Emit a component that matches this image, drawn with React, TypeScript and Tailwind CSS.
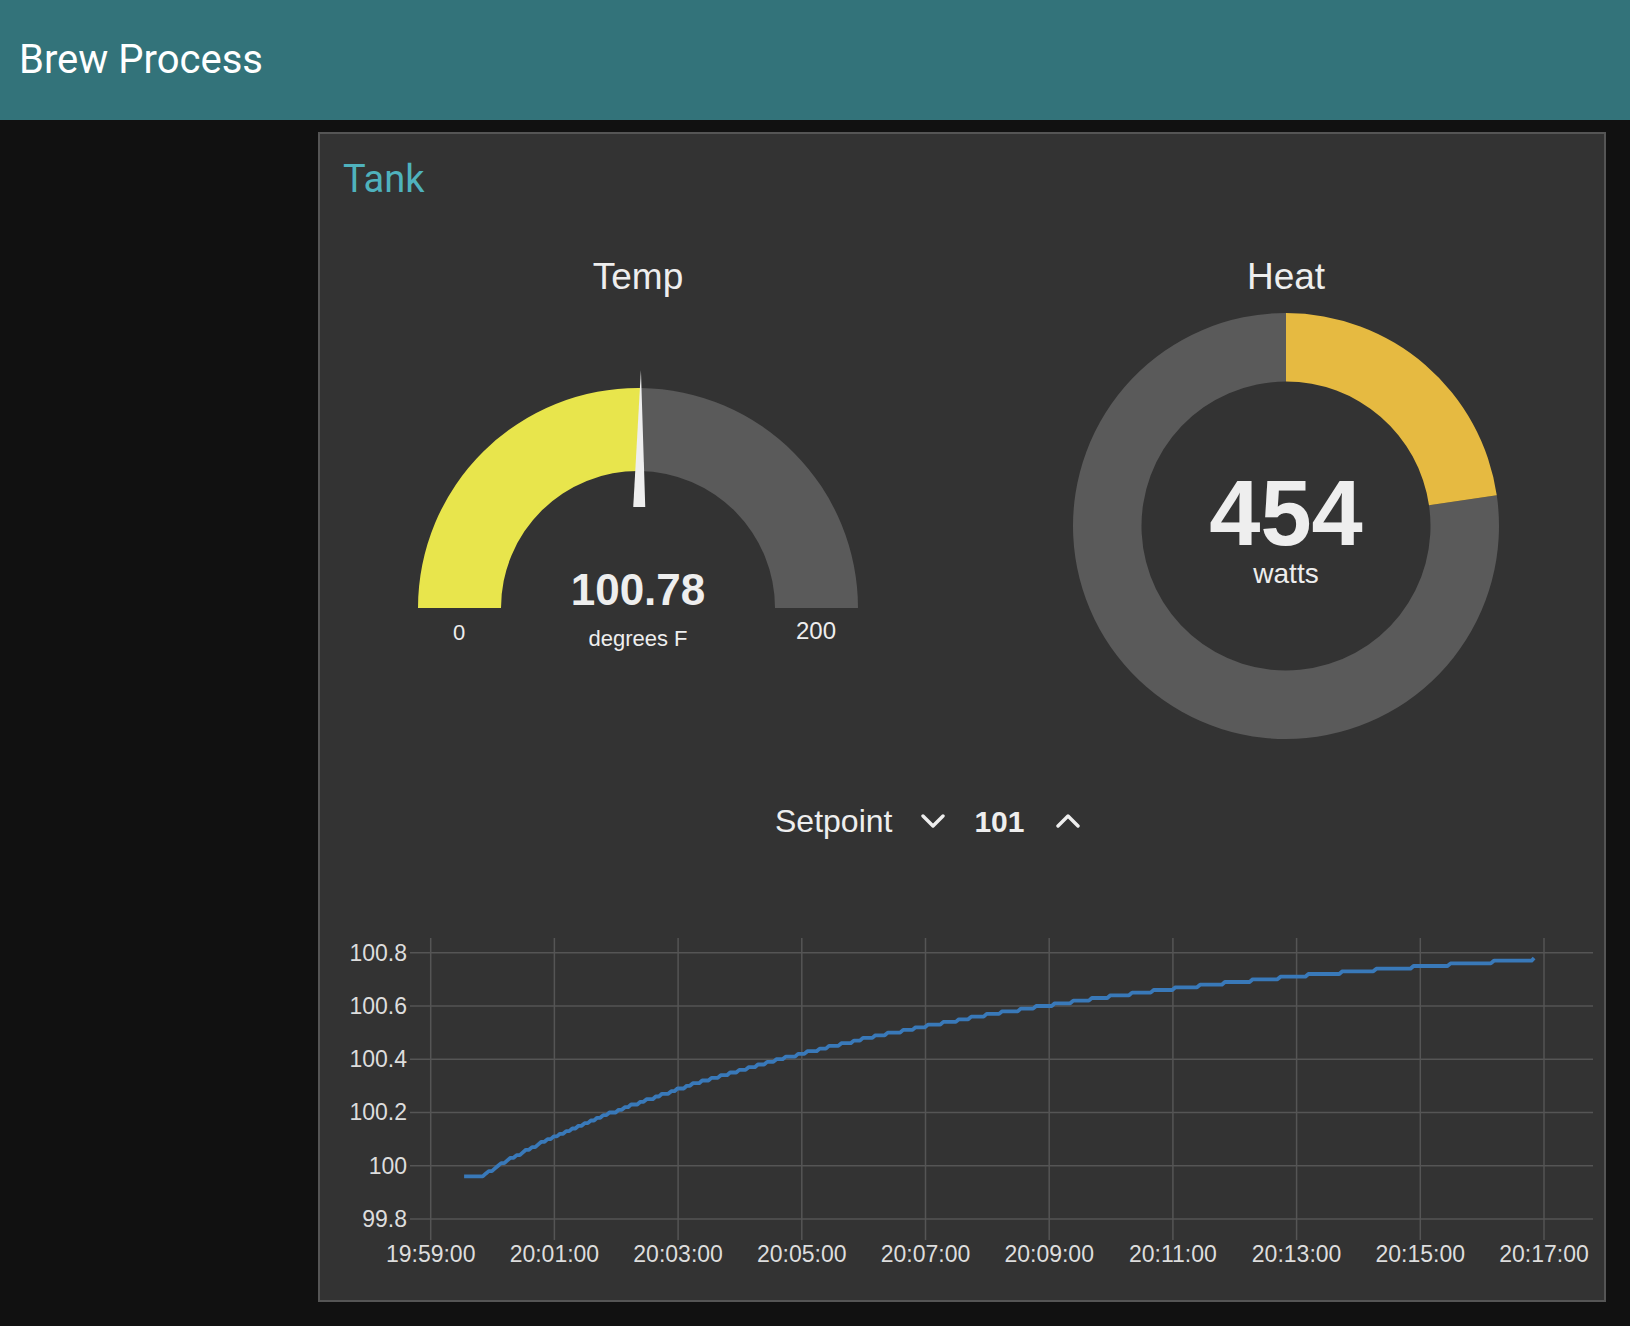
import React from "react";

const SANS = "font-['Liberation_Sans',Arial,sans-serif]";

// gauge geometry
const TEMP = { value: 100.78, min: 0, max: 200, cx: 240, cy: 304, R: 220, r: 137 };
const HEAT = { value: 454, max: 2000, cx: 230, cy: 222, R: 213, r: 144.5 };

function tempPoint(f: number, rad: number) {
  const a = Math.PI * (1 - f);
  return [TEMP.cx + rad * Math.cos(a), TEMP.cy - rad * Math.sin(a)];
}

function heatPoint(f: number, rad: number) {
  const a = 2 * Math.PI * f;
  return [HEAT.cx + rad * Math.sin(a), HEAT.cy - rad * Math.cos(a)];
}

const p = (pt: number[]) => `${pt[0].toFixed(2)} ${pt[1].toFixed(2)}`;

function TempGauge() {
  const { cx, cy, R, r } = TEMP;
  const f = (TEMP.value - TEMP.min) / (TEMP.max - TEMP.min);
  const filled = `M ${cx - R} ${cy} A ${R} ${R} 0 0 1 ${p(tempPoint(f, R))} L ${p(tempPoint(f, r))} A ${r} ${r} 0 0 0 ${cx - r} ${cy} Z`;
  const rest = `M ${p(tempPoint(f, R))} A ${R} ${R} 0 0 1 ${cx + R} ${cy} L ${cx + r} ${cy} A ${r} ${r} 0 0 0 ${p(tempPoint(f, r))} Z`;

  // needle
  const a = Math.PI * (1 - f);
  const ux = Math.cos(a);
  const uy = -Math.sin(a);
  const tip = [cx + 238 * ux, cy + 238 * uy];
  const base = [cx + 101 * ux, cy + 101 * uy];
  const px = -uy * 6;
  const py = ux * 6;
  const needle = `M ${p(tip)} L ${p([base[0] + px, base[1] + py])} L ${p([base[0] - px, base[1] - py])} Z`;

  return (
    <svg width={480} height={380} className={SANS}>
      <path d={filled} fill="#e8e54c" />
      <path d={rest} fill="#5a5a5a" />
      <path d={needle} fill="#eeeeee" />
      <text x={240} y={301} textAnchor="middle" fontSize={44} fontWeight="bold" fill="#eeeeee">
        100.78
      </text>
      <text x={240} y={342} textAnchor="middle" fontSize={22} fill="#eeeeee">
        degrees F
      </text>
      <text x={61} y={336} textAnchor="middle" fontSize={22} fill="#eeeeee">
        0
      </text>
      <text x={418} y={335} textAnchor="middle" fontSize={24} fill="#eeeeee">
        200
      </text>
    </svg>
  );
}

function HeatDonut() {
  const { R, r } = HEAT;
  const f = HEAT.value / HEAT.max;
  const filled = `M ${p(heatPoint(0, R))} A ${R} ${R} 0 0 1 ${p(heatPoint(f, R))} L ${p(heatPoint(f, r))} A ${r} ${r} 0 0 0 ${p(heatPoint(0, r))} Z`;
  const rest = `M ${p(heatPoint(f, R))} A ${R} ${R} 0 1 1 ${p(heatPoint(0, R))} L ${p(heatPoint(0, r))} A ${r} ${r} 0 1 0 ${p(heatPoint(f, r))} Z`;
  return (
    <svg width={460} height={450} className={SANS}>
      <path d={rest} fill="#5a5a5a" />
      <path d={filled} fill="#e6ba41" />
      <text x={230} y={241} textAnchor="middle" fontSize={92} fontWeight="bold" fill="#eeeeee">
        454
      </text>
      <text x={230} y={279} textAnchor="middle" fontSize={28} fill="#eeeeee">
        watts
      </text>
    </svg>
  );
}

function Chevron({ up }: { up?: boolean }) {
  return (
    <svg width={24} height={14} viewBox="0 0 24 14">
      <path
        d={up ? "M2 12 L12 2 L22 12" : "M2 2 L12 12 L22 2"}
        fill="none"
        stroke="#eeeeee"
        strokeWidth={3.4}
        strokeLinecap="round"
        strokeLinejoin="round"
      />
    </svg>
  );
}

// chart geometry, svg coords
const X0 = 110.7;
const DX = 61.85; // px per minute
const Y_BOTTOM = 331;
const PX_PER_UNIT = 266.3;
const yOf = (v: number) => Y_BOTTOM - (v - 99.8) * PX_PER_UNIT;
const xOf = (t: number) => X0 + t * DX;

function buildSeries() {
  const pts: [number, number][] = [];
  for (let t = 0.54; t <= 17.8; t += 0.05) {
    let v = 99.96;
    if (t >= 0.85) {
      v = 100.87 - 0.98 * Math.exp(-0.13 * t) - 0.03 * Math.exp(-(t - 0.85) * 1.5);
    }
    v = Math.round(v * 100) / 100;
    pts.push([t, v]);
  }
  pts.push([17.8, 100.77]);
  pts.push([17.84, 100.78]);
  return pts;
}

function TempChart() {
  const yTicks = [100.8, 100.6, 100.4, 100.2, 100, 99.8];
  const xTicks = ["19:59:00", "20:01:00", "20:03:00", "20:05:00", "20:07:00", "20:09:00", "20:11:00", "20:13:00", "20:15:00", "20:17:00"];
  const series = buildSeries();
  const d = series.map(([t, v], i) => `${i === 0 ? "M" : "L"} ${xOf(t).toFixed(1)} ${yOf(v).toFixed(1)}`).join(" ");

  return (
    <svg width={1284} height={410} className={SANS}>
      {yTicks.map((v) => (
        <g key={v}>
          <line x1={90} x2={1273} y1={yOf(v)} y2={yOf(v)} stroke="#555555" strokeWidth={1.5} />
          <text x={87} y={yOf(v) + 8} textAnchor="end" fontSize={23} fill="#dddddd">
            {v === 100 ? "100" : v.toFixed(1)}
          </text>
        </g>
      ))}
      {xTicks.map((label, i) => (
        <g key={label}>
          <line x1={xOf(i * 2)} x2={xOf(i * 2)} y1={50} y2={352} stroke="#555555" strokeWidth={1.5} />
          <text x={xOf(i * 2)} y={374} textAnchor="middle" fontSize={23} fill="#dddddd">
            {label}
          </text>
        </g>
      ))}
      <path d={d} fill="none" stroke="#3979b9" strokeWidth={3.8} strokeLinejoin="round" />
    </svg>
  );
}

export default function App() {
  return (
    <div className="w-full h-[1326px] bg-[#111111] overflow-hidden">
      {/* Top bar */}
      <div className="h-[120px] bg-[#33737a] pl-[19px] pt-[36px]">
        <h1 className="font-['Roboto',sans-serif] text-[40px] leading-[48px] text-white font-normal">Brew Process</h1>
      </div>

      <div className="flex pl-[318px] pt-[12px]">
        <div className="w-[1288px] h-[1170px] border-2 border-[#555555] bg-[#333333] flex flex-col">
          {/* Group title */}
          <div className="h-[116px] pt-[23px] pl-[23px]">
            <h2 className="font-['Roboto',sans-serif] text-[38px] leading-[44px] text-[#4fb2bd]">Tank</h2>
          </div>

          {/* Gauges */}
          <div className={`flex h-[504px] ${SANS} text-[#eeeeee]`}>
            <div className="ml-[78px] w-[480px] flex flex-col">
              <div className="h-[54px] leading-[54px] text-[37px] text-center">Temp</div>
              <TempGauge />
            </div>
            <div className="ml-[178px] w-[460px] flex flex-col">
              <div className="h-[54px] leading-[54px] text-[37px] text-center">Heat</div>
              <HeatDonut />
            </div>
          </div>

          {/* Setpoint */}
          <div className={`h-[134px] flex items-center pl-[455px] ${SANS} text-[#eeeeee]`}>
            <span className="text-[32px]">Setpoint</span>
            <span className="ml-[29px] flex items-center">
              <Chevron />
            </span>
            <span className="ml-[29px] text-[30px] font-bold">101</span>
            <span className="ml-[32px] flex items-center">
              <Chevron up />
            </span>
          </div>

          {/* Chart */}
          <TempChart />
        </div>
      </div>
    </div>
  );
}
